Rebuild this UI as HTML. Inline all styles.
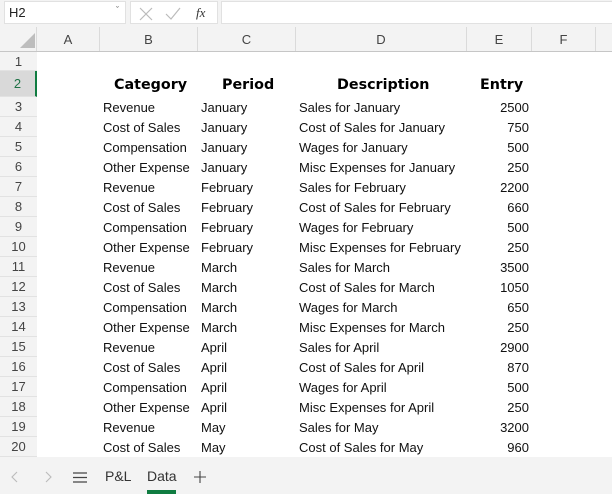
<!DOCTYPE html>
<html><head><style>
body{margin:0;width:612px;height:494px;overflow:hidden;background:#f3f3f3;font-family:"Liberation Sans",sans-serif;position:relative}
.a{position:absolute}
.box{position:absolute;background:#fff;border:1px solid #e1e1e1;box-sizing:border-box}
.ch{position:absolute;top:27px;height:25px;line-height:25px;text-align:center;font-size:13px;color:#444;border-right:1px solid #dadada;box-sizing:border-box}
.rh{position:absolute;left:0;width:37px;text-align:center;font-size:13px;color:#444;border-bottom:1px solid #e2e2e2;box-sizing:border-box;background:#f3f3f3}
.c{position:absolute;font-size:13px;color:#111;white-space:nowrap}
.h{position:absolute;font-size:14.3px;color:#000;top:77px;font-family:"DejaVu Sans","Liberation Sans",sans-serif;font-weight:bold}
</style></head><body>
<div class="box" style="left:4px;top:1px;width:122px;height:23px;"><span class="a" style="left:4px;top:3px;font-size:13px;color:#222">H2</span><span class="a" style="left:111px;top:3px;font-size:9px;color:#555">&#711;</span></div>
<div class="box" style="left:130px;top:1px;width:88px;height:23px;">
<svg class="a" style="left:8px;top:5px" width="14" height="14"><path d="M1 1L13 13M13 1L1 13" stroke="#bbb" stroke-width="1.2"/></svg>
<svg class="a" style="left:34px;top:5px" width="16" height="14"><path d="M1 7L6 12L15 1" stroke="#bbb" stroke-width="1.2" fill="none"/></svg>
<span class="a" style="left:65px;top:3px;font-size:13px;font-style:italic;font-family:'Liberation Serif',serif;color:#333">fx</span></div>
<div class="box" style="left:221px;top:1px;width:395px;height:23px;"></div>
<div class="a" style="left:0;top:52px;width:612px;height:405px;background:#fff"></div>
<svg class="a" style="left:20px;top:33px" width="15" height="15"><path d="M15 0L15 15L0 15Z" fill="#bdbdbd"/></svg>
<div class="ch" style="left:0;width:37px"></div>
<div class="ch" style="left:37px;width:63px">A</div>
<div class="ch" style="left:100px;width:98px">B</div>
<div class="ch" style="left:198px;width:98px">C</div>
<div class="ch" style="left:296px;width:171px">D</div>
<div class="ch" style="left:467px;width:65px">E</div>
<div class="ch" style="left:532px;width:64px">F</div>
<div class="a" style="left:0;top:51px;width:612px;height:1px;background:#c6c6c6"></div>
<div class="a" style="left:36px;top:52px;width:1px;height:405px;background:#c6c6c6"></div>
<div class="rh" style="top:52px;height:19px;line-height:19px">1</div>
<div class="rh" style="top:71px;height:26px;line-height:26px;background:#d9d9d9;color:#1e7145;border-right:2px solid #107c41">2</div>
<div id="rows"></div>
<div class="h" style="left:114px">Category</div>
<div class="h" style="left:222px">Period</div>
<div class="h" style="left:337px">Description</div>
<div class="h" style="left:480px">Entry</div>
<script>
var d=[["Revenue","January","Sales for January",2500],["Cost of Sales","January","Cost of Sales for January",750],["Compensation","January","Wages for January",500],["Other Expense","January","Misc Expenses for January",250],["Revenue","February","Sales for February",2200],["Cost of Sales","February","Cost of Sales for February",660],["Compensation","February","Wages for February",500],["Other Expense","February","Misc Expenses for February",250],["Revenue","March","Sales for March",3500],["Cost of Sales","March","Cost of Sales for March",1050],["Compensation","March","Wages for March",650],["Other Expense","March","Misc Expenses for March",250],["Revenue","April","Sales for April",2900],["Cost of Sales","April","Cost of Sales for April",870],["Compensation","April","Wages for April",500],["Other Expense","April","Misc Expenses for April",250],["Revenue","May","Sales for May",3200],["Cost of Sales","May","Cost of Sales for May",960]];
var h="";d.forEach(function(r,i){var t=97+20*i;
h+='<div class="rh" style="top:'+t+'px;height:20px;line-height:20px">'+(i+3)+'</div>';
h+='<div class="c" style="left:103px;top:'+(t+3)+'px">'+r[0]+'</div><div class="c" style="left:201px;top:'+(t+3)+'px">'+r[1]+'</div><div class="c" style="left:299px;top:'+(t+3)+'px">'+r[2]+'</div><div class="c" style="left:467px;width:62px;text-align:right;top:'+(t+3)+'px">'+r[3]+'</div>';});
document.getElementById("rows").outerHTML=h;
</script>
<div class="a" style="left:0;top:457px;width:612px;height:37px;background:#f3f3f3"></div>
<svg class="a" style="left:11px;top:471px" width="8" height="12"><path d="M6 1L1 6L6 11" stroke="#bbb" stroke-width="1.1" fill="none"/></svg>
<svg class="a" style="left:45px;top:471px" width="8" height="12"><path d="M1 1L6 6L1 11" stroke="#bbb" stroke-width="1.1" fill="none"/></svg>
<svg class="a" style="left:73px;top:472px" width="14" height="11"><path d="M0 1H14M0 5.5H14M0 10H14" stroke="#444" stroke-width="1.2"/></svg>
<span class="a" style="left:105px;top:468px;font-size:14px;color:#333">P&amp;L</span>
<span class="a" style="left:147px;top:468px;font-size:14px;color:#333">Data</span>
<div class="a" style="left:147px;top:490px;width:29px;height:4px;background:#107c41"></div>
<svg class="a" style="left:194px;top:471px" width="12" height="12"><path d="M6 0V12M0 6H12" stroke="#444" stroke-width="1.1"/></svg>
</body></html>
